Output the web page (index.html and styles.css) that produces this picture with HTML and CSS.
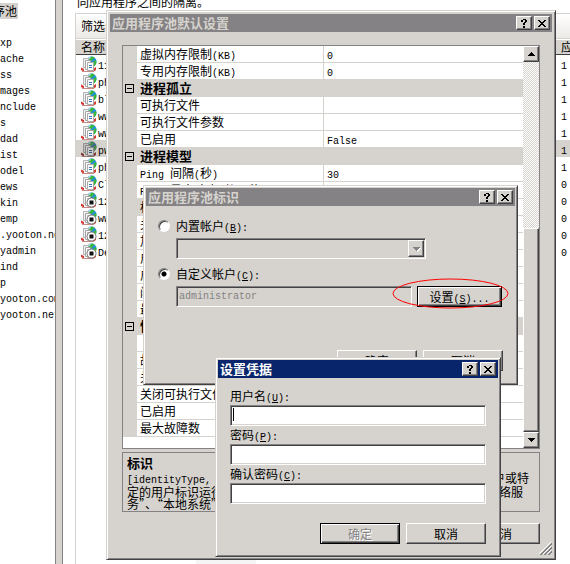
FILE: index.html
```html
<!DOCTYPE html>
<html lang="zh-CN">
<head>
<meta charset="utf-8">
<title>应用程序池</title>
<link rel="stylesheet" href="styles.css">
</head>
<body>
<svg class="defs" aria-hidden="true">
  <symbol id="pool" viewBox="0 0 16 16">
    <circle cx="10.5" cy="5.5" r="5" fill="#248fe0"/>
    <path d="M8 1.5c2-1.500 5-.8 6 .8l-2 .7-1 2-3-1zM12 6l3-2c1 2 .3 4.500-1.500 6.200L11.500 10z" fill="#38b838"/>
    <path d="M7 2l2-1 1 1-2 1z" fill="#b9e5ff"/>
    <path d="M2.500 2.500h5v9h-5z" fill="#eef0f2" stroke="#b5b5b5"/>
    <path d="M0 11.500l3 1.500v2.500L0 14zM12 13l3-2v3l-3 2z" fill="#d33a32"/>
    <path d="M1 15.500h12" stroke="#c98a86"/>
    <path d="M4.500 4.500h5v9h-5z" fill="#fff" stroke="#a5a5a5"/>
    <path d="M6.500 6.500h6v8h-6z" fill="#fff" stroke="#aaa"/>
    <path d="M8 9.500h3M8 11.500h3" stroke="#3874b8"/>
  </symbol>
  <symbol id="stopped" viewBox="0 0 16 16">
    <use href="#pool"/>
    <circle cx="10.500" cy="10.500" r="4.500" fill="#fff" stroke="#777"/>
    <path d="M8.500 8.500h4v4h-4z" fill="#111"/>
  </symbol>
  <symbol id="help" viewBox="0 0 8 9"><path d="M1 1h2V0h3v1h1v2H6v1H5v2H3V4h1V3h1V1H3v2H1zM3 7h2v2H3z"/></symbol>
  <symbol id="close" viewBox="0 0 8 7"><path d="M0 0h2v1h1v1h2V1h1V0h2v1H7v1H6v1H5v1h1v1h1v1h1v1H6V6H5V5H3v1H2v1H0V6h1V5h1V4h1V3H2V2H1V1H0z"/></symbol>
  <symbol id="up" viewBox="0 0 7 4"><path d="M3 0h1v1h1v1h1v1h1v1H0V3h1V2h1V1h1z"/></symbol>
  <symbol id="down" viewBox="0 0 7 4"><path d="M0 0h7v1H6v1H5v1H4v1H3V3H2V2H1V1H0z"/></symbol>
</svg>

<main class="console">
  <nav class="tree">
    <div class="tree-root"><span class="selected">序池</span></div>
    <ul>
      <li>xp</li><li>ache</li><li>ss</li><li>mages</li><li>nclude</li><li>s</li><li>dad</li><li>ist</li><li>odel</li><li>ews</li><li>kin</li><li>emp</li><li>.yooton.net</li><li>yadmin</li><li>ind</li><li>p</li><li>yooton.com</li><li>yooton.net</li>
    </ul>
  </nav>
  <div class="splitter"></div>
  <section class="content">
    <p class="intro">同应用程序之间的隔离。</p>
    <div class="list">
      <div class="filter">筛选:</div>
      <table class="pools">
        <thead><tr><th>名称</th><th class="apps">应用程序</th></tr></thead>
        <tbody>
          <tr><td><svg class="icon"><use href="#pool"/></svg><span class="en">11</span></td><td><span class="en">1</span></td></tr>
          <tr><td><svg class="icon"><use href="#pool"/></svg><span class="en">ph</span></td><td><span class="en">1</span></td></tr>
          <tr><td><svg class="icon"><use href="#pool"/></svg><span class="en">bl</span></td><td><span class="en">1</span></td></tr>
          <tr><td><svg class="icon"><use href="#pool"/></svg><span class="en">ww</span></td><td><span class="en">1</span></td></tr>
          <tr><td><svg class="icon"><use href="#pool"/></svg><span class="en">ww</span></td><td><span class="en">1</span></td></tr>
          <tr class="current"><td><svg class="icon"><use href="#pool"/></svg><span class="en">pw</span></td><td><span class="en">1</span></td></tr>
          <tr><td><svg class="icon"><use href="#pool"/></svg><span class="en">ph</span></td><td><span class="en">1</span></td></tr>
          <tr><td><svg class="icon"><use href="#pool"/></svg><span class="en">Cl</span></td><td><span class="en">0</span></td></tr>
          <tr><td><svg class="icon"><use href="#stopped"/></svg><span class="en">12</span></td><td><span class="en">0</span></td></tr>
          <tr><td><svg class="icon"><use href="#stopped"/></svg><span class="en">ww</span></td><td><span class="en">0</span></td></tr>
          <tr><td><svg class="icon"><use href="#stopped"/></svg><span class="en">12</span></td><td><span class="en">0</span></td></tr>
          <tr><td><svg class="icon"><use href="#stopped"/></svg><span class="en">De</span></td><td><span class="en">0</span></td></tr>
        </tbody>
      </table>
    </div>
  </section>
</main>
<div class="shade"></div>

<section class="window defaults" role="dialog" aria-labelledby="t1">
  <header class="title"><h2 id="t1">应用程序池默认设置</h2>
    <button class="cap" aria-label="帮助"><svg class="glyph-help"><use href="#help"/></svg></button><button class="cap" aria-label="关闭"><svg class="glyph-close"><use href="#close"/></svg></button></header>
  <div class="defaults-body">
    <div class="props">
      <table class="grid">
        <colgroup><col class="c-gutter"><col class="c-name"><col></colgroup>
        <tbody>
        <tr><td></td><td>虚拟内存限制<span class="en">(KB)</span></td><td><span class="en">0</span></td></tr>
        <tr><td></td><td>专用内存限制<span class="en">(KB)</span></td><td><span class="en">0</span></td></tr>
        <tr class="cat"><td><button class="fold" aria-label="折叠"></button></td><th colspan="2">进程孤立</th></tr>
        <tr><td></td><td>可执行文件</td><td></td></tr>
        <tr><td></td><td>可执行文件参数</td><td></td></tr>
        <tr><td></td><td>已启用</td><td><span class="en">False</span></td></tr>
        <tr class="cat"><td><button class="fold" aria-label="折叠"></button></td><th colspan="2">进程模型</th></tr>
        <tr><td></td><td><span class="en">Ping </span>间隔<span class="en">(</span>秒<span class="en">)</span></td><td><span class="en">30</span></td></tr>
        <tr><td></td><td><span class="en">Ping </span>最大响应时间<span class="en">(</span>秒<span class="en">)</span></td><td><span class="en">90</span></td></tr>
        <tr class="picked"><td></td><td>标识</td><td></td></tr>
        <tr><td></td><td>关闭时间限制</td><td></td></tr>
        <tr><td></td><td>加载用户配置文件</td><td></td></tr>
        <tr><td></td><td>启动时间限制</td><td></td></tr>
        <tr><td></td><td>启用<span class="en"> Ping</span></td><td></td></tr>
        <tr><td></td><td>闲置超时</td><td></td></tr>
        <tr><td></td><td>最大工作进程数</td><td></td></tr>
        <tr class="cat"><td><button class="fold" aria-label="折叠"></button></td><th colspan="2">快速故障防护</th></tr>
        <tr><td></td><td>“服务不可用”响应</td><td></td></tr>
        <tr><td></td><td>故障间隔</td><td></td></tr>
        <tr><td></td><td>关闭可执行文件</td><td></td></tr>
        <tr><td></td><td>关闭可执行文件参数</td><td></td></tr>
        <tr><td></td><td>已启用</td><td></td></tr>
        <tr><td></td><td>最大故障数</td><td></td></tr>
        </tbody>
      </table>
      <div class="scroll">
        <button class="arrow" aria-label="向上"><svg class="tri"><use href="#up"/></svg></button>
        <div class="track"></div>
        <div class="thumb"></div>
        <button class="arrow" aria-label="向下"><svg class="tri"><use href="#down"/></svg></button>
      </div>
    </div>
    <div class="help">
      <h3>标识</h3>
      <p><span class="en">[identityType, username, password] </span>配置应用程序池以作为内置帐户或特<br>定的用户标识运行。内置帐户由系统预先定义，可选择的帐户包括“网络服<br>务”、“本地系统”或“本地服务”。</p>
    </div>
    <div class="actions"><button class="btn">确定</button><button class="btn">取消</button></div>
  </div>
  <svg class="grip" viewBox="0 0 13 13"><path d="M0 12L12 0M4 12L12 4M8 12L12 8" stroke="#fff" stroke-width="1"/><path d="M1 13L13 1M2 13L13 2M5 13L13 5M6 13L13 6M9 13L13 9M10 13L13 10" stroke="#848284"/></svg>
</section>

<section class="window identity" role="dialog" aria-labelledby="t2">
  <header class="title"><h2 id="t2">应用程序池标识</h2>
    <button class="cap" aria-label="帮助"><svg class="glyph-help"><use href="#help"/></svg></button><button class="cap" aria-label="关闭"><svg class="glyph-close"><use href="#close"/></svg></button></header>
  <div class="identity-body">
    <label class="choice"><input type="radio" name="account"><span>内置帐户<span class="en">(<u>B</u>):</span></span></label>
    <div class="combo"><select class="field" disabled aria-label="内置帐户"><option></option></select><span class="drop"><svg class="tri"><use href="#down"/></svg></span></div>
    <label class="choice"><input type="radio" name="account" checked><span>自定义帐户<span class="en">(<u>C</u>):</span></span></label>
    <div class="custom"><input class="field" disabled value="administrator" aria-label="自定义帐户"><button class="btn default">设置<span class="en">(<u>S</u>)...</span></button></div>
    <div class="actions"><button class="btn">确定</button><button class="btn">取消</button></div>
  </div>
  <svg class="mark" viewBox="0 0 117 31" aria-hidden="true"><ellipse cx="58.500" cy="15.500" rx="57.500" ry="14.500" fill="none" stroke="#f00"/></svg>
</section>

<section class="window credentials" role="dialog" aria-labelledby="t3">
  <header class="title"><h2 id="t3">设置凭据</h2>
    <button class="cap" aria-label="帮助"><svg class="glyph-help"><use href="#help"/></svg></button><button class="cap" aria-label="关闭"><svg class="glyph-close"><use href="#close"/></svg></button></header>
  <form class="credentials-body">
    <label for="user">用户名<span class="en">(<u>U</u>):</span></label>
    <div class="entry"><input class="field" id="user"><span class="caret"></span></div>
    <label for="pass">密码<span class="en">(<u>P</u>):</span></label>
    <input class="field" id="pass" type="password">
    <label for="again">确认密码<span class="en">(<u>C</u>):</span></label>
    <input class="field" id="again" type="password">
    <div class="actions"><button class="btn default" type="button" disabled>确定</button><button class="btn" type="button">取消</button></div>
  </form>
</section>
</body>
</html>
```
FILE: styles.css
```css
* { box-sizing: border-box; }
:root {
  --face: #d6d3ce;
  --shadow: #848284;
  --dark: #424142;
}
body {
  margin: 0;
  min-height: 100vh;
  overflow: hidden;
  background: #fff;
  color: #000;
  font: 12px/16px "Noto Sans CJK SC", sans-serif;
}
h2, h3, p, ul { margin: 0; padding: 0; }
ul { list-style: none; }
button, input, select { font: inherit; color: inherit; margin: 0; padding: 0; border-radius: 0; }
svg { display: block; }
.defs { position: absolute; width: 0; height: 0; }
.en, .tree li { font-family: "Liberation Mono", monospace; font-size: 10px; white-space: pre; }
.en { line-height: 1; }
u { text-underline-offset: 1px; }

/* console behind the dialogs */
.console { display: flex; height: 100vh; }
.tree { flex: 0 0 55px; overflow: hidden; padding-top: 3px; }
.tree-root { height: 33px; margin-left: -7px; }
.selected { display: inline-block; background: var(--face); height: 16px; line-height: 16px; width: 25px; }
.splitter { flex: 0 0 8px; background: var(--face); border: solid var(--shadow); border-width: 0 1px; }
.content { flex: 1; min-width: 0; padding-left: 12px; display: flex; flex-direction: column; }
.intro { height: 13px; line-height: 4px; padding-left: 2px; overflow: hidden; }
.list { flex: 1; border: solid var(--face); border-width: 1px 0 0 1px; overflow: hidden; }
.filter { height: 25px; padding-left: 5px; line-height: 24px; background: linear-gradient(#fff, #ece9e6); border-bottom: 1px solid var(--face); }
.pools { width: 100%; table-layout: fixed; border-collapse: separate; border-spacing: 0; }
.pools th { height: 16px; padding: 0 0 0 5px; font-weight: normal; line-height: 14px; text-align: left; background: var(--face); border-top: 1px solid #fff; border-bottom: 1px solid var(--dark); overflow: hidden; white-space: nowrap; }
.pools .apps { width: 14px; }
.pools td { height: 17px; padding: 0 0 0 5px; line-height: 16px; overflow: hidden; white-space: nowrap; }
.icon { display: inline-block; width: 16px; height: 16px; margin-right: 1px; vertical-align: top; }
.current { background: var(--face); }
.current .icon { filter: brightness(.8) saturate(.6); }
.shade { position: absolute; left: 196px; bottom: 0; width: 60px; height: 4px; background: #f5f5f5; }

/* windows */
.window {
  position: absolute;
  background: var(--face);
  border: 1px solid;
  border-color: var(--face) var(--dark) var(--dark) var(--face);
  box-shadow: inset 1px 1px #fff, inset -1px -1px var(--shadow);
  padding: 2px;
}
.defaults { left: 106px; top: 10px; width: 450px; height: 550px; padding: 3px; }
.identity { left: 143px; top: 185px; width: 375px; height: 200px; }
.credentials { left: 215px; top: 357px; width: 286px; height: 200px; }
.title { display: flex; align-items: center; height: 18px; padding: 0 2px; background: var(--shadow); color: var(--face); }
.title h2 { flex: 1; font-size: 13px; line-height: 18px; font-weight: 700; }
.credentials .title { background: #08246b; color: #fff; }
.cap, .arrow, .drop {
  display: grid;
  place-items: center;
  width: 16px;
  height: 14px;
  background: var(--face);
  color: #000;
  border: 1px solid;
  border-color: #fff var(--dark) var(--dark) #fff;
  box-shadow: inset -1px -1px var(--shadow);
}
.cap + .cap { margin-left: 2px; }
.glyph-help { width: 8px; height: 9px; }
.glyph-close { width: 8px; height: 7px; }
.tri { width: 7px; height: 4px; }

.btn {
  width: 80px;
  height: 21px;
  line-height: 16px;
  background: var(--face);
  border: 1px solid;
  border-color: #fff var(--dark) var(--dark) #fff;
  box-shadow: inset -1px -1px var(--shadow);
}
.btn.default { border-color: #000; box-shadow: inset 1px 1px #fff, inset -1px -1px var(--dark), inset -2px -2px var(--shadow); }
.btn:disabled { color: var(--shadow); text-shadow: 1px 1px #fff; }
.actions { display: flex; justify-content: flex-end; gap: 6px; }
.field {
  display: block;
  width: 100%;
  height: 21px;
  padding: 0 2px;
  background: #fff;
  border: 1px solid;
  border-color: var(--shadow) #fff #fff var(--shadow);
  box-shadow: inset 1px 1px var(--dark), inset -1px -1px var(--face);
  outline: 0;
  appearance: none;
}
.field:disabled { background: var(--face); color: var(--shadow); opacity: 1; font-family: "Liberation Mono", monospace; font-size: 10px; }

/* property grid */
.defaults-body { padding: 13px 12px 0; }
.props { display: flex; align-items: stretch; height: 404px; background: #fff; border: 1px solid var(--shadow); }
.grid { flex: 1; align-self: flex-start; table-layout: fixed; border-collapse: separate; border-spacing: 0; width: 0; }
.c-gutter { width: 14px; }
.c-name { width: 187px; }
.grid td, .grid th { height: 17px; padding: 0 0 0 3px; line-height: 16px; text-align: left; white-space: nowrap; border-bottom: 1px solid var(--face); overflow: hidden; }
.grid td:first-child { padding: 0 0 0 2px; background: var(--face); }
.grid td:nth-child(2) { border-right: 1px solid var(--face); }
.grid th { font-size: 13px; background: var(--face); }
.picked td:nth-child(2) { background: var(--face); }
.fold { display: block; width: 9px; height: 9px; border: 1px solid #000; background: linear-gradient(#000, #000) center / 5px 1px no-repeat; }
.scroll { flex: 0 0 16px; display: flex; flex-direction: column; }
.arrow { flex: 0 0 16px; }
.track { flex: 167; background: repeating-conic-gradient(#fff 0 25%, var(--face) 0 50%) 0 0 / 2px 2px; }
.thumb { flex: 203; background: var(--face); border: 1px solid; border-color: #fff var(--dark) var(--dark) #fff; box-shadow: inset -1px -1px var(--shadow); }
.help { height: 60px; margin: 3px 0 11px; padding: 2px 4px; border: 1px solid var(--shadow); white-space: nowrap; overflow: hidden; }
.help h3 { font-size: 13px; line-height: 16px; }
.help p { line-height: 12px; padding-top: 1px; }
.grip { position: absolute; right: 3px; bottom: 4px; width: 13px; height: 13px; }

/* identity dialog */
.identity-body { padding: 12px 12px 0; }
.choice { display: flex; align-items: center; gap: 6px; height: 16px; }
.choice input { appearance: none; width: 12px; height: 12px; border-radius: 50%; background: #fff; border: 1px solid; border-color: var(--shadow) #fff #fff var(--shadow); box-shadow: inset 1px 1px var(--dark); }
.choice input:checked { background: radial-gradient(#000 2px, #fff 3px); }
.combo { position: relative; width: 250px; margin: 4px 0 7px 18px; }
.drop { position: absolute; right: 2px; top: 2px; height: 17px; }
.drop .tri { fill: var(--shadow); filter: drop-shadow(1px 1px #fff); }
.custom { display: flex; gap: 5px; margin: 4px 0 43px 18px; }
.custom .field { width: 236px; }
.custom .btn { width: 85px; }
.mark { position: absolute; left: 248px; top: 92px; width: 117px; height: 31px; pointer-events: none; }

/* credentials dialog */
.credentials-body { display: flex; flex-direction: column; padding: 10px 12px 0; }
.credentials-body label { height: 16px; margin-bottom: 1px; }
.credentials-body label:not(:first-child) { margin-top: 1px; }
.entry { position: relative; }
.caret { position: absolute; left: 3px; top: 3px; width: 1px; height: 13px; background: #000; }
.credentials-body .actions { margin-top: 19px; }
```
